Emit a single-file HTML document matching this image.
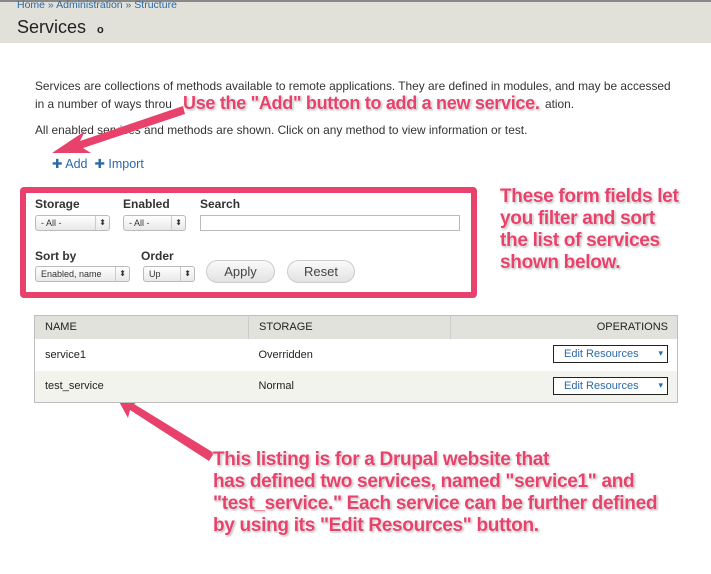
<!DOCTYPE html>
<html><head><style>
*{margin:0;padding:0;box-sizing:border-box}
body{width:711px;height:574px;background:#fff;font-family:"Liberation Sans",sans-serif;position:relative;overflow:hidden;color:#333}
.hdr{position:absolute;left:0;top:0;width:711px;height:43px;background:#e1e0d9;border-top:2px solid #888}
.bc{position:absolute;left:17px;top:-3px;font-size:10.5px;color:#2a6aa8}
.h1{position:absolute;left:17px;top:15px;font-size:18px;color:#222}
.p{position:absolute;left:35px;font-size:11.9px;color:#333}
.a{position:absolute;font-weight:bold;color:#e8416b;text-shadow:0 0 2px #fff,0 0 2px #fff,1px 1px 2px #888;letter-spacing:-0.3px;white-space:nowrap}
.box{position:absolute;left:20px;top:187px;width:457px;height:111px;border:6px solid #e8416b;border-radius:4px}
.lbl{position:absolute;font-size:12px;font-weight:bold;color:#333}
.sel{position:absolute;height:16px;border:1px solid #bbb;border-radius:3px;background:linear-gradient(#fff,#e8e8e8);font-size:9px;padding:2px 5px;color:#333}
.sel:after{content:"⬍";position:absolute;right:3px;top:2px;font-size:8px}
.sel i{position:absolute;right:13px;top:0;bottom:0;border-left:1px solid #ccc}
.btn{position:absolute;height:23px;border:1px solid #ccc;border-radius:12px;background:linear-gradient(#fafafa,#e2e2e2);font-size:13px;color:#444;text-align:center;line-height:21px}
table{position:absolute;left:34px;top:315px;width:644px;border-collapse:collapse;font-size:11px;border:1px solid #bebebe}
th{background:#e1e2dc;font-weight:normal;text-align:left;height:23px;padding-left:10px;border-right:1px solid #ccc;color:#222}
td{height:32px;padding-left:10px;color:#222}
tr.z td{background:#f3f3ee}
.er{position:absolute;left:553px;width:115px;height:18px;border:1px solid #222;background:#fff;font-size:11px;color:#2a6aa8;padding:2px 0 0 10px}
.er:after{content:"▾";position:absolute;right:4px;top:2px;font-size:9px}
</style></head><body>
<div class="hdr"><div class="bc">Home » Administration » Structure</div><div class="h1">Services <span style="font-size:11px;font-weight:bold;margin-left:6px">o</span></div></div>
<div class="p" style="top:79px">Services are collections of methods available to remote applications. They are defined in modules, and may be accessed</div>
<div class="p" style="top:97px">in a number of ways throu</div>
<div class="p" style="top:97px;left:545px">ation.</div>
<div class="p" style="top:123px">All enabled services and methods are shown. Click on any method to view information or test.</div>
<div class="p" style="top:156px;left:52px;font-size:12.5px;color:#2a6aa8">✚ Add &nbsp;✚ Import</div>
<svg style="position:absolute;left:0;top:0" width="711" height="574">
<path d="M183,106 L80,141 L85,131 L52,153 L91,153 L83,148 L185,114Z" fill="#e8416b"/>
<path d="M214,453 L134,404 L142,400 L116,396 L128,418 L130,410 L209,461Z" fill="#e8416b"/>
</svg>
<div class="a" style="left:183px;top:93px;font-size:18px">Use the "Add" button to add a new service.</div>
<div class="box"></div>
<div class="lbl" style="left:35px;top:197px">Storage</div>
<div class="lbl" style="left:123px;top:197px">Enabled</div>
<div class="lbl" style="left:200px;top:197px">Search</div>
<div class="sel" style="left:35px;top:215px;width:75px">- All -<i></i></div>
<div class="sel" style="left:123px;top:215px;width:63px">- All -<i></i></div>
<div style="position:absolute;left:200px;top:215px;width:260px;height:16px;border:1px solid #bbb"></div>
<div class="lbl" style="left:35px;top:249px">Sort by</div>
<div class="lbl" style="left:141px;top:249px">Order</div>
<div class="sel" style="left:35px;top:266px;width:95px">Enabled, name<i></i></div>
<div class="sel" style="left:143px;top:266px;width:52px">Up<i></i></div>
<div class="btn" style="left:206px;top:260px;width:69px">Apply</div>
<div class="btn" style="left:287px;top:260px;width:68px">Reset</div>
<div class="a" style="left:500px;top:186px;font-size:19px;line-height:22px">These form fields let<br>you filter and sort<br>the list of services<br>shown below.</div>
<table>
<tr><th style="width:214px">NAME</th><th style="width:202px">STORAGE</th><th style="text-align:right;padding-right:9px;border-right:0">OPERATIONS</th></tr>
<tr><td>service1</td><td>Overridden</td><td></td></tr>
<tr class="z"><td>test_service</td><td>Normal</td><td></td></tr>
</table>
<div class="er" style="top:345px">Edit Resources</div>
<div class="er" style="top:377px">Edit Resources</div>
<div class="a" style="left:213px;top:449px;font-size:19px;line-height:22px">This listing is for a Drupal website that<br>has defined two services, named "service1" and<br>"test_service." Each service can be further defined<br>by using its "Edit Resources" button.</div>
</body></html>
